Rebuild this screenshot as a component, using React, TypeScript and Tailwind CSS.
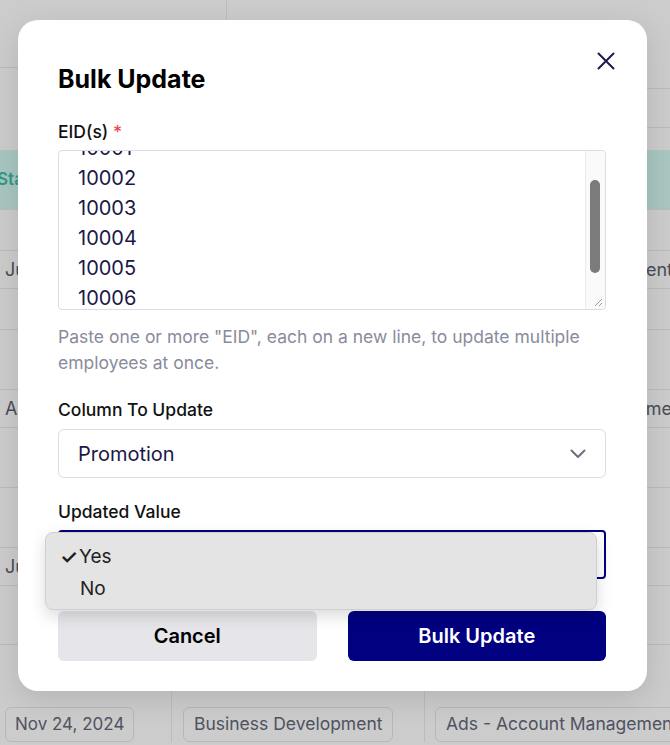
import React from "react";

const font = { fontFamily: "Inter, 'Noto Sans', sans-serif" };

function BgRow({ h, children }: { h: string; children?: React.ReactNode }) {
  return <div className={`${h} shrink-0 border-b border-[#bcbcbc] flex items-center`}>{children}</div>;
}

export default function App() {
  const eids = ["10001", "10002", "10003", "10004", "10005", "10006", "10007"];
  return (
    <div className="relative h-[745px] w-full overflow-hidden bg-[#cccccc]" style={font}>
      {/* faux table background */}
      <div className="flex h-full">
        <div className="w-[335px] shrink-0 flex flex-col">
          <div className="h-[68px] shrink-0 border-b border-[#bcbcbc] flex">
            <div className="w-[227px] border-r border-[#bcbcbc]" />
          </div>
          <div className="h-[82px] shrink-0" />
          <div className="h-[60px] shrink-0 bg-[#a9c6c0] border-b border-[#bcbcbc] flex items-center text-[#2f9a86] font-semibold text-[17px] -ml-[3px]">Status</div>
          <BgRow h="h-[41px]" />
          <BgRow h="h-[38px]"><span className="pl-[5px] text-[18px] text-[#4a4d57] whitespace-nowrap">Jun 12, 2024</span></BgRow>
          <BgRow h="h-[41px]" />
          <BgRow h="h-[60px]" />
          <BgRow h="h-[38px]"><span className="pl-[5px] text-[18px] text-[#4a4d57] whitespace-nowrap">Aug 3, 2024</span></BgRow>
          <BgRow h="h-[60px]" />
          <BgRow h="h-[60px]" />
          <BgRow h="h-[38px]"><span className="pl-[5px] text-[18px] text-[#4a4d57] whitespace-nowrap">Jul 8, 2024</span></BgRow>
          <BgRow h="h-[59px]" />
          <div className="flex items-end flex-1 pb-[3px]">
            <div className="w-[172px] shrink-0 h-full flex items-end border-r border-[#bcbcbc]">
              <div className="ml-[5px] h-[35px] px-[9px] rounded-md border border-[#b8b8b8] flex items-center text-[17px] text-[#4f5361] whitespace-nowrap">Nov 24, 2024</div>
            </div>
            <div className="ml-[11px] shrink-0 h-[35px] px-[10px] rounded-md border border-[#b8b8b8] flex items-center text-[17.5px] text-[#4f5361] whitespace-nowrap">Business Development</div>
          </div>
        </div>
        <div className="flex-1 min-w-0 flex flex-col">
          <div className="h-[89px] shrink-0 border-b border-[#bcbcbc]" />
          <div className="h-[39px] shrink-0 border-b border-[#bcbcbc]" />
          <div className="h-[22px] shrink-0" />
          <div className="h-[60px] shrink-0 bg-[#a9c6c0] border-b border-[#bcbcbc]" />
          <BgRow h="h-[41px]" />
          <BgRow h="h-[38px]"><span className="ml-auto -mr-[3px] text-[18px] text-[#4a4d57] whitespace-nowrap">Development</span></BgRow>
          <BgRow h="h-[41px]" />
          <BgRow h="h-[60px]" />
          <BgRow h="h-[38px]"><span className="ml-auto -mr-[2px] text-[18px] text-[#4a4d57] whitespace-nowrap">Manageme</span></BgRow>
          <BgRow h="h-[60px]" />
          <BgRow h="h-[60px]" />
          <BgRow h="h-[38px]" />
          <BgRow h="h-[59px]" />
          <div className="flex items-end flex-1 pb-[3px]">
            <div className="w-[90px] shrink-0 h-full border-r border-[#bcbcbc]" />
            <div className="ml-[10px] shrink-0 h-[35px] px-[10px] rounded-md border border-[#b8b8b8] flex items-center text-[17.5px] text-[#4f5361] whitespace-nowrap">Ads - Account Management</div>
          </div>
        </div>
      </div>

      {/* modal */}
      <div className="absolute left-[18px] top-[20px] w-[629px] rounded-[20px] bg-white pl-[40px] pr-[41px] pt-[43px] pb-[30px] shadow-[0_8px_30px_rgba(0,0,0,0.12)]">
        <button className="absolute right-[32px] top-[32px] w-[18px] h-[18px]">
          <svg viewBox="0 0 18 18" width="18" height="18" fill="none" stroke="#1e1b4b" strokeWidth="2" strokeLinecap="round">
            <path d="M1.5 1.5 L16.5 16.5 M16.5 1.5 L1.5 16.5" />
          </svg>
        </button>
        <h2 className="text-[25px] leading-[32px] font-bold text-black">Bulk Update</h2>

        <div className="mt-[25px] text-[17.5px] leading-[24px] font-medium text-[#111]">
          EID(s) <span className="text-[#e5484d]">*</span>
        </div>
        <div className="mt-[6px] relative h-[160px] rounded border border-[#dcdce3] flex overflow-hidden">
          <div className="flex-1 overflow-hidden pl-[19px]">
            <div className="-mt-[18px] text-[20px] leading-[30px] text-[#1b1846]">
              {eids.map((e) => (
                <div key={e}>{e}</div>
              ))}
            </div>
          </div>
          <div className="w-[20px] bg-[#fafafa] border-l border-[#ebebeb] pt-[29px] pl-[4px]">
            <div className="w-[10px] h-[93px] rounded-full bg-[#7b7b7b]" />
          </div>
          <svg className="absolute right-[2px] bottom-[2px]" width="9" height="9" viewBox="0 0 9 9" stroke="#9a9a9a" strokeWidth="1">
            <path d="M8 1 L1 8 M8 5 L5 8" />
          </svg>
        </div>
        <p className="mt-[14px] text-[17.5px] leading-[26px] text-[#8a8b9c]">
          Paste one or more "EID", each on a new line, to update multiple employees at once.
        </p>

        <div className="mt-[22px] text-[17.5px] leading-[24px] font-medium text-[#111]">Column To Update</div>
        <div className="mt-[7px] h-[49px] rounded-md border border-[#dcdce3] flex items-center justify-between pl-[19px] pr-[19px]">
          <span className="text-[20px] text-[#1b1846]">Promotion</span>
          <svg width="16" height="10" viewBox="0 0 16 10" fill="none" stroke="#6b7080" strokeWidth="2" strokeLinecap="round" strokeLinejoin="round">
            <path d="M1.5 1.5 L8 8 L14.5 1.5" />
          </svg>
        </div>

        <div className="mt-[22px] text-[17.5px] leading-[24px] font-medium text-[#111]">Updated Value</div>
        <div className="mt-[6px] relative h-[49px] rounded border-2 border-[#000080] flex items-center pl-[19px]">
          <span className="text-[20px] text-[#1b1846]">Yes</span>
          <div className="absolute -left-[15px] top-0 w-[552px] h-[78px] rounded-lg bg-[#e4e4e4] border border-[#cfcfcf] shadow-[0_6px_16px_rgba(0,0,0,0.15)] pt-[8px] text-[19px] text-[#1f1f1f]">
            <div className="h-[32px] flex items-center">
              <span className="w-[33px] pl-[14px] text-[20px] leading-none font-semibold">✓</span>
              <span>Yes</span>
            </div>
            <div className="h-[32px] flex items-center">
              <span className="w-[34px]" />
              <span>No</span>
            </div>
          </div>
        </div>

        <div className="mt-[32px] grid grid-cols-2 gap-[31px]">
          <button className="h-[50px] rounded-md bg-[#e5e5ea] text-[20px] font-semibold text-black">Cancel</button>
          <button className="h-[50px] rounded-md bg-[#000080] text-[20px] font-semibold text-white">Bulk Update</button>
        </div>
      </div>
    </div>
  );
}
